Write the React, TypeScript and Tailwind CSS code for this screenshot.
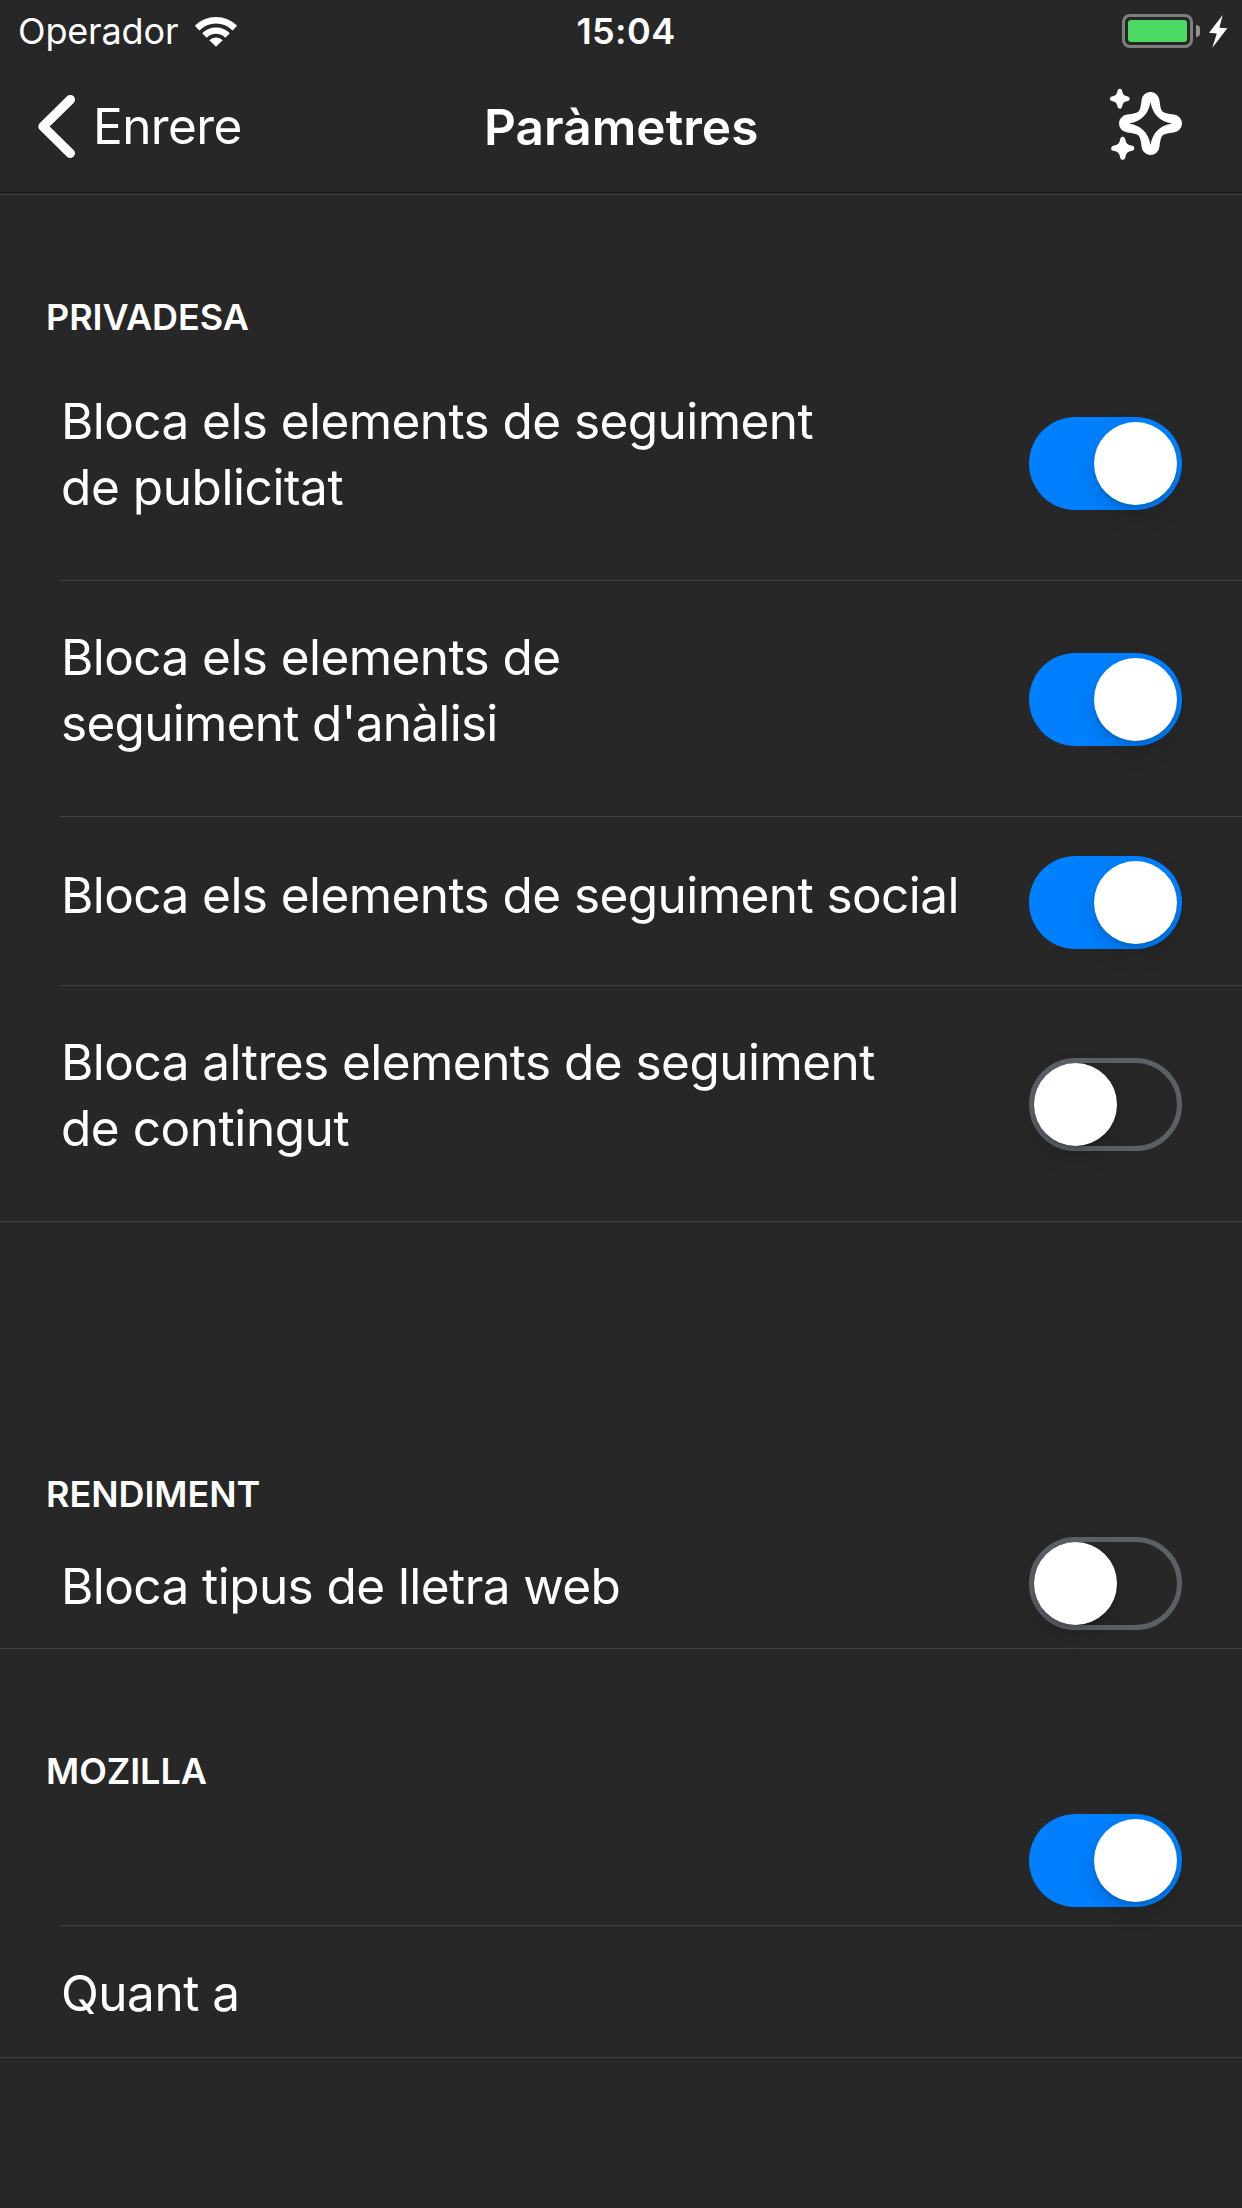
import React from "react";

function WifiIcon() {
  return (
    <svg className="h-[34px] w-[44px]" viewBox="0 0 44 34" fill="none">
      <path d="M3.12 14.12A26.7 26.7 0 0 1 40.88 14.12" stroke="#fff" strokeWidth="6.5" />
      <path d="M10.4 21.4A16.4 16.4 0 0 1 33.6 21.4" stroke="#fff" strokeWidth="6.3" />
      <path d="M22 32.8L15.3 26.2A9.4 9.4 0 0 1 28.7 26.2Z" fill="#fff" />
    </svg>
  );
}

function Battery() {
  return (
    <div className="flex items-center">
      <div className="h-[34px] w-[71px] rounded-[8px] border-[3px] border-[#7e7e7e] p-[3px]">
        <div className="h-full w-full rounded-[3px] bg-[#4cd964]" />
      </div>
      <div className="ml-[3px] h-[12px] w-[4px] rounded-r-full bg-[#939393]" />
      <svg className="ml-[9px] h-[34px] w-[19px]" viewBox="0 0 19 34">
        <path d="M13.7 1L0 18.8L7.8 19.4L3.3 33.7L18.3 14.3L10.4 13.7Z" fill="#fff" />
      </svg>
    </div>
  );
}

function Chevron() {
  return (
    <svg className="h-[66px] w-[40px]" viewBox="0 0 40 66" fill="none">
      <path
        d="M33.3 6.6L6 33.5L33.3 60.3"
        stroke="#fff"
        strokeWidth="9.4"
        strokeLinecap="round"
        strokeLinejoin="round"
      />
    </svg>
  );
}

function Sparkles() {
  return (
    <svg className="h-[76px] w-[74px]" viewBox="28 86 74 76" overflow="visible">
      <g transform="translate(70.5 123.5)">
        <path
          d="M0-22.5C1.5-6 6-1.5 22.5 0C6 1.5 1.5 6 0 22.5C-1.5 6-6 1.5-22.5 0C-6-1.5-1.5-6 0-22.5Z"
          fill="#fff"
          stroke="#fff"
          strokeWidth="18"
          strokeLinejoin="round"
        />
        <path
          d="M0-21.5C2.2-9 9-2.2 21.5 0C9 2.2 2.2 9 0 21.5C-2.2 9-9 2.2-21.5 0C-9-2.2-2.2-9 0-21.5Z"
          fill="#272727"
        />
      </g>
      <path
        transform="translate(39.8 98.7)"
        d="M0-7.6C1-2.6 2.6-1 7.6 0C2.6 1 1 2.6 0 7.6C-1 2.6-2.6 1-7.6 0C-2.6-1-1-2.6 0-7.6Z"
        fill="#fff"
        stroke="#fff"
        strokeWidth="4.6"
        strokeLinejoin="round"
      />
      <path
        transform="translate(42.7 148.3)"
        d="M0-9C1-3.2 3.2-1 9 0C3.2 1 1 3.2 0 9C-1 3.2-3.2 1-9 0C-3.2-1-1-3.2 0-9Z"
        fill="#fff"
        stroke="#fff"
        strokeWidth="5"
        strokeLinejoin="round"
      />
    </svg>
  );
}

function Toggle({ on }: { on: boolean }) {
  return (
    <div
      role="switch"
      aria-checked={on}
      className={
        on
          ? "mr-[60px] flex h-[93px] w-[153px] shrink-0 justify-end rounded-full bg-[#0080ff] p-[5px]"
          : "mr-[60px] flex h-[93px] w-[153px] shrink-0 justify-start rounded-full border-[5px] border-[#5b6067]"
      }
    >
      <div className="h-[83px] w-[83px] rounded-full bg-white shadow-[0_9px_24px_rgba(0,0,0,0.15),0_3px_3px_rgba(0,0,0,0.1)]" />
    </div>
  );
}

function Heading({ children }: { children: React.ReactNode }) {
  return <h2 className="pl-[46px] text-[36px] leading-[44px] font-semibold tracking-[-0.05px]">{children}</h2>;
}

const label = "pl-px text-[49.5px] leading-[66px] whitespace-nowrap tracking-[-0.57px]";

export default function App() {
  return (
    <div className="flex h-[2208px] w-[1242px] flex-col overflow-hidden bg-[#272727] font-['Inter',sans-serif] text-white">
      <header className="flex h-[193px] flex-col border-b border-[#1d1d1d]">
        <div className="flex h-[60px] items-center justify-between pt-[2px] pr-[14px] pl-[18px] text-[36px] leading-[44px]">
          <div className="flex w-[540px] items-center gap-[16px]">
            <span className="tracking-[-0.15px]">Operador</span>
            <WifiIcon />
          </div>
          <span className="mr-[4px] font-semibold tracking-[0.4px]">15:04</span>
          <div className="flex w-[530px] justify-end">
            <Battery />
          </div>
        </div>
        <nav className="flex items-start pt-[26px] pr-[60px] pl-[37px]">
          <div className="flex w-[447px] gap-[16px] pt-[7px]">
            <Chevron />
            <span className="text-[49.5px] leading-[66px] tracking-[-0.6px]">Enrere</span>
          </div>
          <h1 className="pt-[8px] text-[49.5px] leading-[66px] font-semibold tracking-[0.05px]">Paràmetres</h1>
          <div className="ml-auto">
            <Sparkles />
          </div>
        </nav>
      </header>
      <div className="mt-px h-px shrink-0 bg-[#424242]" />

      <section className="pt-[100px]">
        <Heading>PRIVADESA</Heading>
        <div className="mt-[6px] flex flex-col border-b border-[#424242] pl-[60px]">
          <div className="flex h-[236px] items-start justify-between border-b border-[#424242]">
            <p className={`${label} pt-[43px]`}>
              Bloca els elements de seguiment
              <br />
              <span className="tracking-[-0.42px]">de publicitat</span>
            </p>
            <div className="pt-[72px]">
              <Toggle on />
            </div>
          </div>
          <div className="flex h-[236px] items-start justify-between border-b border-[#424242]">
            <p className={`${label} pt-[43px]`}>
              Bloca els elements de
              <br />
              <span className="tracking-[-0.72px]">seguiment d'anàlisi</span>
            </p>
            <div className="pt-[72px]">
              <Toggle on />
            </div>
          </div>
          <div className="flex h-[169px] items-start justify-between border-b border-[#424242]">
            <p className={`${label} pt-[45px]`}>Bloca els elements de seguiment social</p>
            <div className="pt-[39px]">
              <Toggle on />
            </div>
          </div>
          <div className="flex h-[235px] items-start justify-between">
            <p className={`${label} pt-[43px]`}>
              <span className="tracking-[-0.54px]">Bloca altres elements de seguiment</span>
              <br />
              <span className="tracking-[-0.45px]">de contingut</span>
            </p>
            <div className="pt-[72px]">
              <Toggle on={false} />
            </div>
          </div>
        </div>
      </section>

      <section className="pt-[250px]">
        <Heading>RENDIMENT</Heading>
        <div className="mt-px flex h-[132px] items-start justify-between border-b border-[#424242] pl-[60px]">
          <p className={`${label} pt-[36px]`}>Bloca tipus de lletra web</p>
          <div className="pt-[20px]">
            <Toggle on={false} />
          </div>
        </div>
      </section>

      <section className="pt-[100px]">
        <Heading>MOZILLA</Heading>
        <div className="mt-px flex flex-col border-b border-[#424242] pl-[60px]">
          <div className="flex h-[132px] items-start justify-end border-b border-[#424242] pt-[20px]">
            <Toggle on />
          </div>
          <div className="h-[131px] pt-[34px] pl-px text-[49.5px] leading-[66px] tracking-[-0.5px]">Quant a</div>
        </div>
      </section>
    </div>
  );
}
